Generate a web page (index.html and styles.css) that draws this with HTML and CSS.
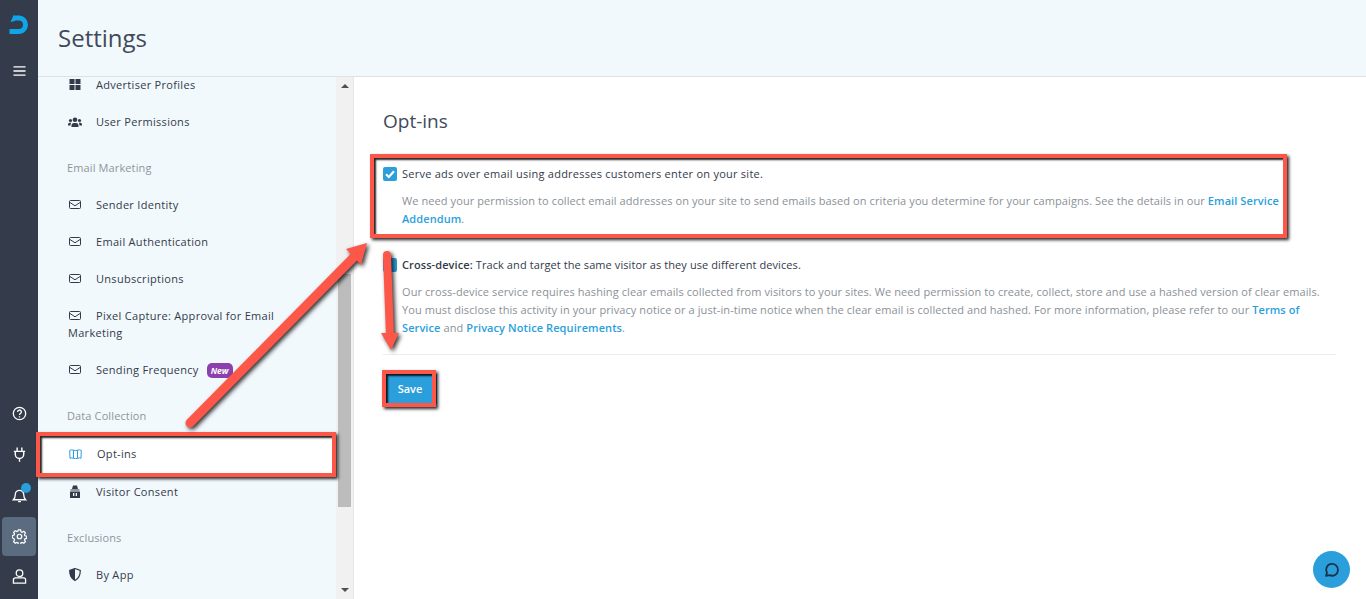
FILE: index.html
```html
<!DOCTYPE html>
<html lang="en">
<head>
<meta charset="utf-8">
<title>Settings</title>
<link rel="stylesheet" href="styles.css">
</head>
<body>
<div class="app">
  <aside class="rail">
    <div class="rail-top">
      <svg class="logo" viewBox="0 0 20 20"><path d="M4 3 H10.500 A6.800 6.800 0 0 1 10.500 16.500 H0.500" fill="none" stroke="#0ea5e9" stroke-width="5"/><path d="M1.500 7 L4.500 0.500 L6 6 Z" fill="#0ea5e9"/></svg>
      <svg class="rail-icon burger" viewBox="0 0 14 12"><path d="M0.500 1.500H13.500M0.500 6H13.500M0.500 10.500H13.500" stroke="#fff" stroke-width="1.400"/></svg>
    </div>
    <div class="rail-bottom">
      <div class="rail-btn"><svg class="rail-icon" viewBox="0 0 16 16" fill="none" stroke="#fff" stroke-width="1.400"><circle cx="8" cy="8" r="6.600"/><path d="M6 6.300a2 2 0 1 1 3 1.700c-.7.400-1 .8-1 1.500"/><path d="M8 11v1.300"/></svg></div>
      <div class="rail-btn"><svg class="rail-icon" viewBox="0 0 16 16" fill="none" stroke="#fff" stroke-width="1.500"><path d="M5.500 .5v4M10.500 .5v4M2 4.700h12M3.500 4.700v3a4.500 4.500 0 0 0 9 0v-3M8 12.200v3.500"/></svg></div>
      <div class="rail-btn bell"><svg class="rail-icon" viewBox="0 0 16 16" fill="none" stroke="#fff" stroke-width="1.400"><path d="M1.500 12.500c1.500-1.500 2-2.500 2-5.500a4.500 4.500 0 0 1 9 0c0 3 .5 4 2 5.500z"/><path d="M6.500 14.500h3"/></svg><span class="dot"></span></div>
      <div class="rail-btn active"><svg class="rail-icon" viewBox="0 0 16 16" fill="none" stroke="#fff" stroke-width="1.300"><circle cx="8" cy="8" r="2.400"/><path d="M6.800 1h2.400l.4 1.900 1.300.6 1.700-1 1.700 1.700-1 1.700.5 1.300 1.900.5v2.400l-1.900.4-.5 1.300 1 1.700-1.700 1.700-1.700-1-1.300.5-.4 1.900H6.800l-.4-1.900-1.300-.5-1.700 1-1.700-1.700 1-1.700-.5-1.300L.3 9.400V7l1.900-.5.5-1.300-1-1.700 1.700-1.700 1.700 1 1.300-.6z"/></svg></div>
      <div class="rail-btn"><svg class="rail-icon" viewBox="0 0 16 16" fill="none" stroke="#fff" stroke-width="1.400"><circle cx="8" cy="4.500" r="3.500"/><path d="M3.500 9.500h9a2 2 0 0 1 2 2v3.500h-13v-3.500a2 2 0 0 1 2-2z"/></svg></div>
    </div>
  </aside>
  <div class="shell">
    <header class="topbar"><h1>Settings</h1></header>
    <div class="body">
      <nav class="side">
        <div class="side-list">
          <a class="item"><svg class="ic" viewBox="0 0 12 12" fill="#333b4a"><path d="M0 0h5.500v5.500H0zM6.500 0H12v5.500H6.500zM0 6.500h5.500V12H0zM6.500 6.500H12V12H6.500z"/></svg>Advertiser Profiles</a>
          <a class="item"><svg class="ic wide" viewBox="0 0 14 10" fill="#333b4a"><circle cx="7" cy="2.800" r="2.300"/><circle cx="2.500" cy="3.500" r="1.600"/><circle cx="11.500" cy="3.500" r="1.600"/><path d="M3.500 10V8a2.500 2.500 0 0 1 2.500-2h2a2.500 2.500 0 0 1 2.500 2v2zM0 8.500V7.300C0 6.300 1 5.700 2 5.700h1.300C2.700 6.500 2.600 7.500 2.500 8.500zM14 8.500V7.300C14 6.300 13 5.700 12 5.700h-1.300c.6.800.7 1.800.8 2.800z"/></svg>User Permissions</a>
          <div class="group">Email Marketing</div>
          <a class="item"><svg class="ic mail" viewBox="0 0 12 9" fill="none" stroke="#333b4a"><rect x=".5" y=".5" width="11" height="8" rx="1"/><path d="M.5 2.200 6 5.800l5.500-3.600"/></svg>Sender Identity</a>
          <a class="item"><svg class="ic mail" viewBox="0 0 12 9" fill="none" stroke="#333b4a"><rect x=".5" y=".5" width="11" height="8" rx="1"/><path d="M.5 2.200 6 5.800l5.500-3.600"/></svg>Email Authentication</a>
          <a class="item"><svg class="ic mail" viewBox="0 0 12 9" fill="none" stroke="#333b4a"><rect x=".5" y=".5" width="11" height="8" rx="1"/><path d="M.5 2.200 6 5.800l5.500-3.600"/></svg>Unsubscriptions</a>
          <a class="item"><svg class="ic mail" viewBox="0 0 12 9" fill="none" stroke="#333b4a"><rect x=".5" y=".5" width="11" height="8" rx="1"/><path d="M.5 2.200 6 5.800l5.500-3.600"/></svg>Pixel Capture: Approval for Email Marketing</a>
          <a class="item"><svg class="ic mail" viewBox="0 0 12 9" fill="none" stroke="#333b4a"><rect x=".5" y=".5" width="11" height="8" rx="1"/><path d="M.5 2.200 6 5.800l5.500-3.600"/></svg>Sending Frequency<span class="badge">New</span></a>
          <div class="group">Data Collection</div>
          <a class="item current"><svg class="ic map" viewBox="0 0 13 10" fill="none" stroke="#2a9fdc"><path d="M.7 1.500 Q2.500.3 4.500 1.200 L4.500 9.300 Q2.500 8.500 1 9.300zM4.500 1.200 Q6.500 2 8.500 1.200 V9.300 Q6.500 10 4.500 9.300M8.500 1.200 Q10.500.3 12.300 1.500 L12 9.300 Q10.500 8.500 8.500 9.300"/></svg>Opt-ins</a>
          <a class="item"><svg class="ic tall" viewBox="0 0 12 13" fill="#333b4a"><path d="M4 .5h4l1 3.500H3zM1.500 4.500h9v1h-9zM1 6.500h10V13H1z"/><path d="M4 8h1.300v3H4zM6.700 8H8v3H6.700z" fill="#f2f9fd"/></svg>Visitor Consent</a>
          <div class="group">Exclusions</div>
          <a class="item"><svg class="ic tall" viewBox="0 0 12 13"><path d="M6 .5 11.300 2.500C11.300 7 10 10.500 6 12.500 2 10.500.7 7 .7 2.500z" fill="#f2f9fd" stroke="#333b4a" stroke-width="1.200"/><path d="M6 .5V12.500C2 10.500.7 7 .7 2.500z" fill="#333b4a"/></svg>By App</a>
        </div>
        <div class="scrollbar">
          <span class="arrow-up"></span>
          <span class="thumb"></span>
          <span class="arrow-down"></span>
        </div>
      </nav>
      <main class="content">
        <h2>Opt-ins</h2>
        <section class="option">
          <div class="option-title first"><span class="check on"><svg viewBox="0 0 14 14"><path d="M3 7.300 5.800 10 11 4.300" fill="none" stroke="#fff" stroke-width="2.200"/></svg></span>Serve ads over email using addresses customers enter on your site.</div>
          <p>We need your permission to collect email addresses on your site to send emails based on criteria you determine for your campaigns. See the details in our <a>Email Service Addendum</a>.</p>
        </section>
        <section class="option second">
          <div class="option-title"><span class="check on"></span><span><b>Cross-device:</b> Track and target the same visitor as they use different devices.</span></div>
          <p>Our cross-device service requires hashing clear emails collected from visitors to your sites. We need permission to create, collect, store and use a hashed version of clear emails. You must disclose this activity in your privacy notice or a just-in-time notice when the clear email is collected and hashed. For more information, please refer to our <a>Terms of Service</a> and <a>Privacy Notice Requirements</a>.</p>
        </section>
        <hr>
        <button class="save" type="button">Save</button>
      </main>
    </div>
  </div>
</div>

<div class="mark mark-option"></div>
<div class="mark mark-nav"></div>
<div class="mark mark-save"></div>
<svg class="arrows" viewBox="0 0 1366 599">
  <path d="M190 423 L356 255" fill="none" stroke="#fd5749" stroke-width="9" stroke-linecap="round"/>
  <path d="M367 243 L346 249 L361 265 Z" fill="#fd5749"/>
  <path d="M387 255 L390 336" fill="none" stroke="#fd5749" stroke-width="8" stroke-linecap="round"/>
  <path d="M391 350 L381 333 L399 333 Z" fill="#fd5749"/>
</svg>
<button class="chat" type="button" aria-label="Chat"><svg viewBox="0 0 18 18" fill="none" stroke="#17324a" stroke-width="1.900"><path d="M3.200 15.800l1-3.300A6.300 6.300 0 1 1 7 15z" stroke-linejoin="round"/></svg></button>
</body>
</html>
```
FILE: styles.css
```css
* { box-sizing: border-box; }
html, body { margin: 0; height: 100%; overflow: hidden; }
body { font-family: "Open Sans", "Noto Sans", sans-serif; font-size: 11px; color: #333b4a; background: #fff; position: relative; }
.app { display: flex; height: 599px; }

.rail { width: 38px; flex: none; background: #343b4a; display: flex; flex-direction: column; justify-content: space-between; }
.rail-top { display: flex; flex-direction: column; align-items: center; padding-top: 15px; }
.logo { width: 20px; height: 20px; display: block; }
.burger { margin-top: 30px; width: 13px !important; height: 12px !important; }
.rail-bottom { display: flex; flex-direction: column; align-items: center; padding-bottom: 2px; }
.rail-btn { width: 34px; height: 40px; display: flex; align-items: center; justify-content: center; position: relative; border-radius: 4px; margin-bottom: 1px; }
.rail-btn.active { background: #5b6c80; height: 39px; margin-top: 1px; margin-bottom: 0; }
.rail-icon { width: 15px; height: 15px; display: block; }
.dot { position: absolute; width: 10px; height: 10px; border-radius: 50%; background: #2a9fdc; top: 8px; left: 19px; }

.shell { flex: 1; min-width: 0; display: flex; flex-direction: column; }
.topbar { height: 77px; flex: none; background: #f2f9fd; border-bottom: 1px solid #dde2e7; display: flex; align-items: center; padding-left: 20px; }
.topbar h1 { margin: 0 0 1px; font-size: 24px; font-weight: 400; color: #414a5a; }
.body { flex: 1; min-height: 0; display: flex; }

.side { width: 316px; flex: none; display: flex; background: #f2f9fd; border-right: 1px solid #e4e7ea; overflow: hidden; }
.side-list { flex: 1; min-width: 0; margin-top: -11px; font-size: 11px; }
.item { display: block; padding: 10px 46px 10px 30px; line-height: 17px; color: #333b4a; font-weight: 500; letter-spacing: .3px; }
.ic { display: inline-block; width: 12px; height: 11px; margin: 0 15px 0 1px; vertical-align: -1px; }
.ic.mail { height: 9px; vertical-align: 0; }
.ic.wide { width: 14px; height: 10px; margin: 0 14px 0 0; }
.ic.tall { height: 13px; vertical-align: -2px; }
.ic.map { width: 13px; height: 10px; margin: 0 15px 0 1px; vertical-align: -1px; }
.group { margin-top: 9px; padding: 10px 29px; line-height: 17px; color: #8f959c; letter-spacing: .12px; }
.item.current { background: #fff; height: 39px; padding-top: 11px; }
.badge { display: inline-block; margin-left: 8px; background: #8e3fae; color: #fff; font-size: 8.500px; line-height: 15px; font-weight: 700; font-style: italic; padding: 0 4px; border-radius: 5px; vertical-align: 0; letter-spacing: 0; }

.scrollbar { width: 17px; flex: none; background: #f1f1f1; position: relative; }
.thumb { position: absolute; top: 197px; left: 2px; width: 13px; height: 233px; background: #bcbcbc; }
.arrow-up, .arrow-down { position: absolute; left: 5px; width: 0; height: 0; border-left: 4px solid transparent; border-right: 4px solid transparent; }
.arrow-up { top: 7px; border-bottom: 4px solid #505050; }
.arrow-down { bottom: 7px; border-top: 4px solid #505050; }

.content { flex: 1; min-width: 0; padding: 30px 30px 0 29px; }
.content h2 { margin: 0; font-size: 19px; font-weight: 400; line-height: 28px; color: #414a5a; }
.option { margin-top: 30px; }
.option.second { margin-top: 28px; }
.option-title { display: flex; align-items: center; line-height: 18px; height: 18px; font-weight: 500; letter-spacing: .09px; white-space: pre-wrap; }
.option-title.first { letter-spacing: .25px; }
.option-title b { font-weight: 600; }
.check { width: 14px; height: 14px; background: #2a9fdc; border-radius: 2px; margin-right: 5px; flex: none; }
.check svg { display: block; width: 14px; height: 14px; }
.option p { margin: 9px 0 0; padding-left: 19px; line-height: 18px; color: #8b9198; letter-spacing: .09px; }
.option p a { color: #2a9fdc; font-weight: 600; }
.content hr { margin: 17px 0 0; border: 0; border-top: 1px solid #ebedef; }
.save { display: block; margin-top: 19px; width: 54px; height: 30px; background: #2a9fdc; border: 0; color: #fff; font: 600 11px "Open Sans", sans-serif; padding: 0 0 2px; }

.mark { position: absolute; border: 4px solid #fd5749; box-shadow: 2px 2px 3px rgba(0,0,0,.85), inset 2px 2px 2px rgba(0,0,0,.85); }
.mark-option { left: 370px; top: 154px; width: 917px; height: 84px; }
.mark-nav { left: 36px; top: 432px; width: 300px; height: 45px; }
.mark-save { left: 382px; top: 370px; width: 54px; height: 37px; }
.arrows { position: absolute; left: 0; top: 0; width: 1366px; height: 599px; pointer-events: none; filter: drop-shadow(2px 2px 2px rgba(0,0,0,.8)); }

.chat { position: absolute; left: 1313px; top: 551px; width: 37px; height: 37px; border-radius: 50%; border: 0; padding: 10px; background: #2a9fdc; }
.chat svg { display: block; width: 17px; height: 17px; }
```
